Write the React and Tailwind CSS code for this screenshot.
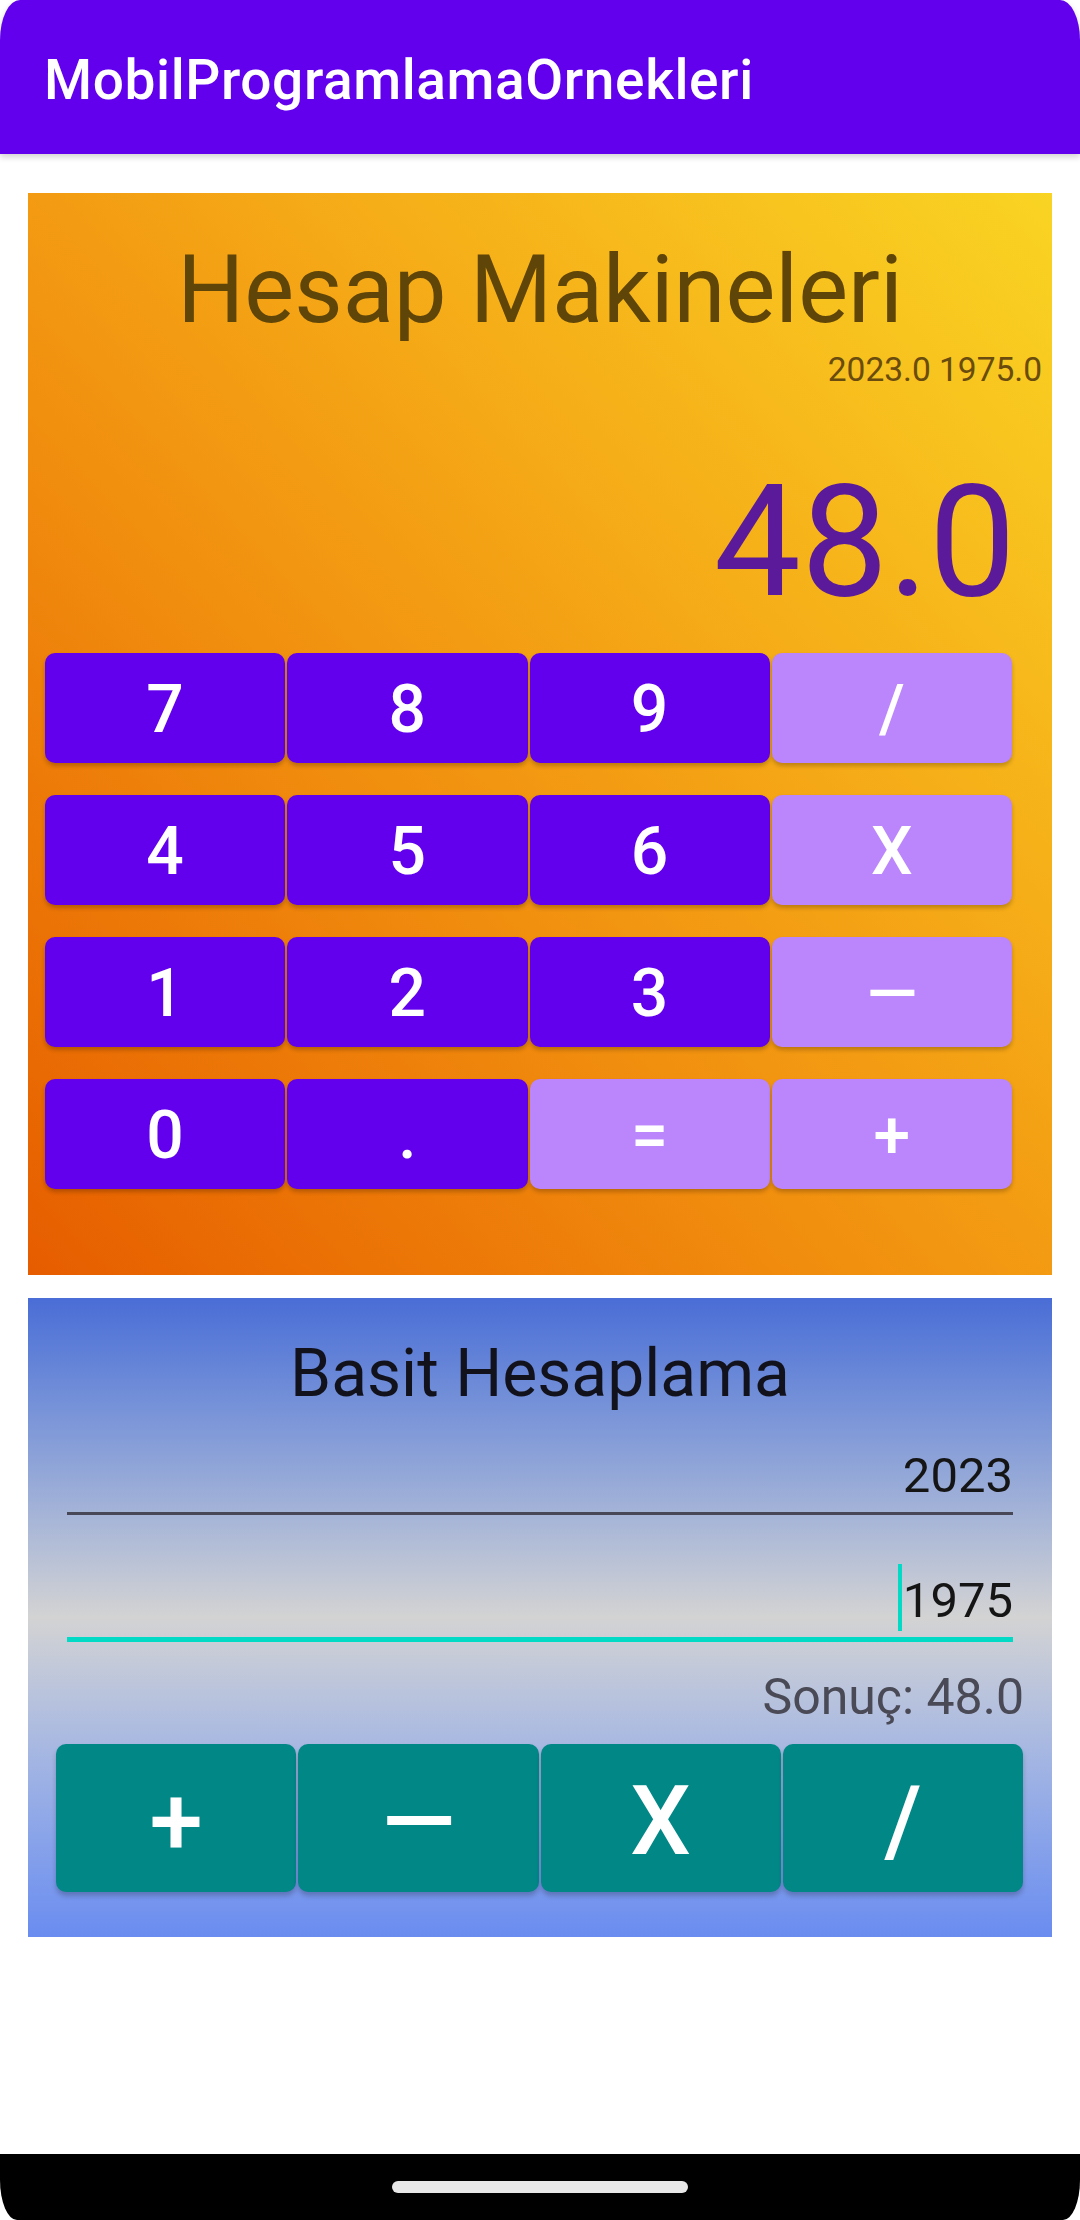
import React from "react";

const keys = [
  { t: "7", op: false },
  { t: "8", op: false },
  { t: "9", op: false },
  { t: "/", op: true },
  { t: "4", op: false },
  { t: "5", op: false },
  { t: "6", op: false },
  { t: "X", op: true },
  { t: "1", op: false },
  { t: "2", op: false },
  { t: "3", op: false },
  { t: "—", op: true },
  { t: "0", op: false },
  { t: ".", op: false },
  { t: "=", op: true },
  { t: "+", op: true },
];

const ops = ["+", "—", "X", "/"];

export default function App() {
  return (
    <div
      className="w-[1080px] h-[2220px] bg-white flex flex-col overflow-hidden"
      style={{ fontFamily: "Roboto, 'Noto Sans', sans-serif" }}
    >
      {/* App bar */}
      <div className="h-[154px] shrink-0 bg-[#6200ee] rounded-tl-[20px_40px] rounded-tr-[20px_40px] shadow-[0_3px_6px_rgba(0,0,0,0.18)] pl-[44px] pt-[53px] relative z-10">
        <div className="text-[55px] leading-none font-medium tracking-[0.6px] text-white">MobilProgramlamaOrnekleri</div>
      </div>

      {/* Card 1 */}
      <div className="mt-[39px] mx-[28px] h-[1082px] shrink-0 bg-linear-to-tr from-[#e65c00] to-[#f9d423] flex flex-col">
        <div className="mt-[50px] text-center text-[94px] leading-none text-[#604508]">Hesap Makineleri</div>
        <div className="mt-[16px] text-right pr-[10px] text-[33.5px] leading-none text-[#6a4c0e]">2023.0 1975.0</div>
        <div className="mt-[78px] text-right pr-[36px] text-[155px] leading-none text-[#5a1a9a]">48.0</div>
        <div className="mt-[33px] ml-[17px] w-[967px] grid grid-cols-4 gap-x-[2px] gap-y-[32px]">
          {keys.map((k, i) => (
            <div
              key={i}
              className={
                "h-[110px] pt-[5px] rounded-[10px] flex items-center justify-center text-white text-[66px] font-medium leading-none shadow-[0_3px_4px_rgba(0,0,0,0.22)] " +
                (k.op ? "bg-[#bb86fc]" : "bg-[#6200ee]")
              }
            >
              {k.t}
            </div>
          ))}
        </div>
      </div>

      {/* Card 2 */}
      <div className="mt-[23px] mx-[28px] h-[639px] shrink-0 bg-linear-to-b from-[#4a6dd6] via-[#d3d3d3] to-[#6a8cf0] flex flex-col">
        <div className="pt-[43px] text-center text-[66px] leading-none text-[#12121c]">Basit Hesaplama</div>
        <div className="mt-[44px] mx-[39px] flex flex-col">
          <div className="text-right text-[49px] leading-none text-[#151515]">2023</div>
          <div className="mt-[12px] h-[3px] bg-[#474758]"></div>
        </div>
        <div className="mt-[61px] mx-[39px] flex flex-col">
          <div className="text-right text-[49px] leading-none text-[#151515]">
            <span className="relative inline-block">
              <span className="absolute left-[-5px] top-[-12px] w-[4px] h-[67px] bg-[#03dac5]"></span>
              1975
            </span>
          </div>
          <div className="mt-[12px] h-[5px] bg-[#03dac5]"></div>
        </div>
        <div className="mt-[30px] pr-[28px] text-right text-[50px] leading-none text-[#4a4a56]">Sonuç: 48.0</div>
        <div className="mt-[22px] ml-[28px] w-[967px] grid grid-cols-4 gap-x-[2px]">
          {ops.map((o, i) => (
            <div
              key={i}
              className="h-[148px] pt-[6px] rounded-[10px] bg-[#018786] flex items-center justify-center text-white text-[96px] font-medium leading-none shadow-[0_4px_5px_rgba(0,0,0,0.22)]"
            >
              {o}
            </div>
          ))}
        </div>
      </div>

      <div className="flex-1"></div>

      {/* Nav bar */}
      <div className="h-[66px] shrink-0 bg-black rounded-bl-[17px_40px] rounded-br-[17px_40px] flex justify-center pt-[27px]">
        <div className="w-[296px] h-[12px] rounded-full bg-[#e8e8e8]"></div>
      </div>
    </div>
  );
}
